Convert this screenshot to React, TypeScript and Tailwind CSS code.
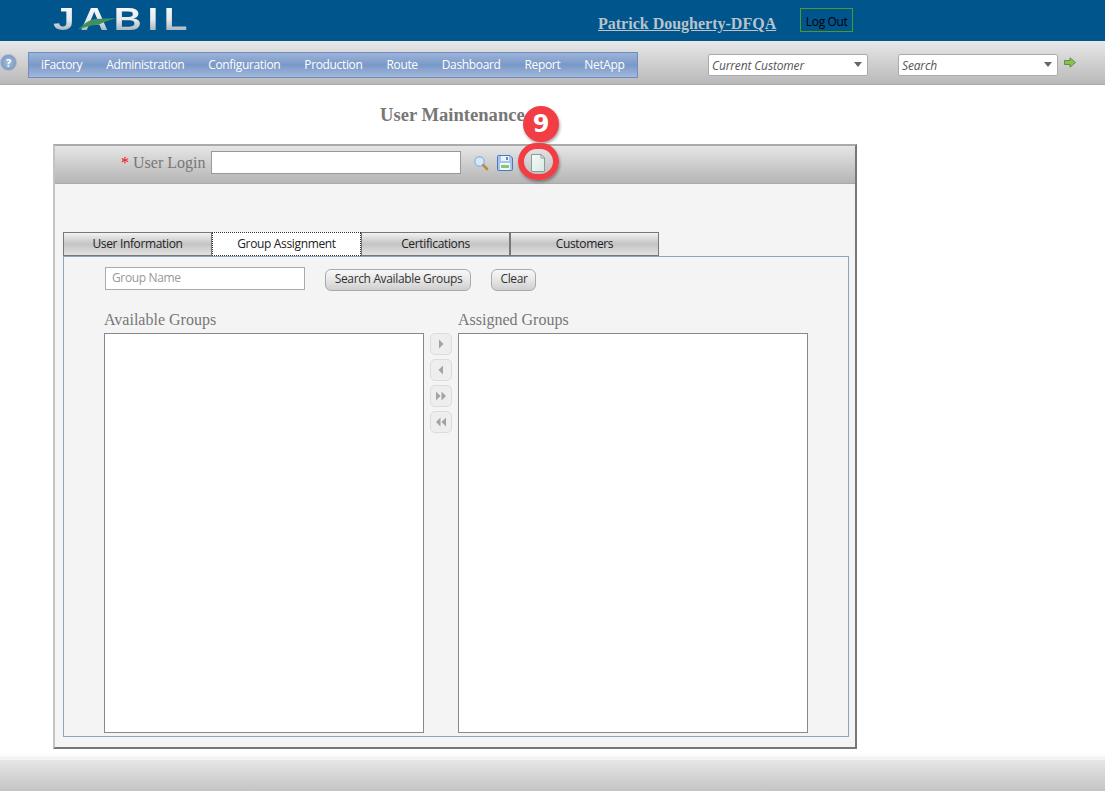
import React from "react";

const sans = "font-['Open_Sans','Noto_Sans',sans-serif] tracking-[-0.35px]";
const serif = "font-['Liberation_Serif',serif]";

const menuItems = ["iFactory", "Administration", "Configuration", "Production", "Route", "Dashboard", "Report", "NetApp"];

const Logo = () => (
  <div className="relative ml-[53px] mt-[8px] h-[23px] w-[135px]">
    <span className="block origin-left scale-x-125 bg-linear-to-b from-[#f6f8f9] via-[#e6eaec] to-[#a5b4bf] bg-clip-text font-['Liberation_Sans',sans-serif] text-[31px] font-bold leading-[23px] tracking-[4.5px] text-transparent">
      JABIL
    </span>
    <svg className="absolute left-[25px] top-[9px]" width="40" height="13" viewBox="0 0 40 13">
      <path d="M0 12.5 C6 7 11 3 17 2 L39 1 C32 3 26 5 22 7 C14 8 7 10 0 12.5Z" fill="#3f8f5f" />
    </svg>
  </div>
);

const HelpIcon = () => (
  <div className="flex h-[17px] w-[17px] items-center justify-center rounded-full border border-[#a9b9cf] bg-radial from-[#a9bfdc] to-[#6f8db8] text-[11px] font-bold leading-none text-white">
    ?
  </div>
);

const Combo = ({ label }: { label: string }) => (
  <div className="flex h-[22px] w-[160px] items-center justify-between rounded-[2px] border border-[#aaa] bg-white pl-[3px] pr-[5px]">
    <span className="pt-[2px] font-['Open_Sans',sans-serif] text-[12px] italic tracking-[-0.15px] text-[#555]">{label}</span>
    <span className="h-0 w-0 border-x-[4px] border-t-[5px] border-x-transparent border-t-[#666]" />
  </div>
);

const Tab = ({ label, active }: { label: string; active?: boolean }) => (
  <div
    className={`flex h-[24px] w-[149px] items-center justify-center text-[12px] text-[#222] ${sans} ${
      active
        ? "border border-dotted border-[#333] bg-white"
        : "border border-[#777] bg-linear-to-b from-[#f2f2f2] via-[#c4c4c4] to-[#e2e2e2]"
    }`}
  >
    {label}
  </div>
);

const GrayButton = ({ label, w }: { label: string; w: string }) => (
  <button
    className={`${w} h-[22px] rounded-[6px] border border-[#aaa] bg-linear-to-b from-[#f8f8f8] via-[#e6e6e6] to-[#cfcfcf] pb-[2px] pl-[1px] text-[12px] text-[#333] ${sans}`}
  >
    {label}
  </button>
);

const MoveButton = ({ kind }: { kind: "r" | "l" | "rr" | "ll" }) => (
  <div className="flex h-[22px] w-[22px] items-center justify-center rounded-[5px] border border-[#dcdcdc] bg-[#eeeeee]">
    <svg width="12" height="10" viewBox="0 0 12 10" fill="#a3a3a3">
      {kind === "r" && <path d="M4 0.5 L8.5 5 L4 9.5Z" />}
      {kind === "l" && <path d="M8 0.5 L3.5 5 L8 9.5Z" />}
      {kind === "rr" && <path d="M1 0.5 L5.5 5 L1 9.5Z M6.5 0.5 L11 5 L6.5 9.5Z" />}
      {kind === "ll" && <path d="M5.5 0.5 L1 5 L5.5 9.5Z M11 0.5 L6.5 5 L11 9.5Z" />}
    </svg>
  </div>
);

const ToolIcons = () => (
  <div className="ml-[12px] flex items-center">
    <svg width="16" height="16" viewBox="0 0 16 16">
      <circle cx="6.5" cy="6.5" r="4.7" fill="#d6e8f8" stroke="#93b8da" strokeWidth="1.4" />
      <path d="M10.2 10.2 L14 14" stroke="#b98a45" strokeWidth="2.6" strokeLinecap="round" />
    </svg>
    <svg className="ml-[8px]" width="16" height="16" viewBox="0 0 16 16">
      <path d="M0.5 1.5 Q0.5 0.5 1.5 0.5 H13 L15.5 3 V14.5 Q15.5 15.5 14.5 15.5 H1.5 Q0.5 15.5 0.5 14.5Z" fill="#a9c4ea" stroke="#4a78c0" />
      <rect x="4" y="1" width="8" height="5" fill="#eef4fb" />
      <rect x="9" y="2" width="2" height="3" fill="#5d8acb" />
      <rect x="3" y="8" width="10" height="7" fill="#f2f6fb" />
      <rect x="4" y="10" width="8" height="3" fill="#86c76f" />
    </svg>
    <svg className="ml-[18px]" width="14" height="18" viewBox="0 0 14 18">
      <defs>
        <linearGradient id="docFill" x1="0" y1="0" x2="1" y2="1">
          <stop offset="0" stopColor="#f6fbf8" />
          <stop offset="1" stopColor="#d8e8e2" />
        </linearGradient>
      </defs>
      <path d="M0.5 0.5 H10 L13.5 4 V17.5 H0.5Z" fill="url(#docFill)" stroke="#8b9b9b" />
      <path d="M10 0.5 V4 H13.5Z" fill="#fff" stroke="#8b9b9b" />
    </svg>
  </div>
);

const ListColumn = ({ title, w }: { title: string; w: string }) => (
  <div className={`${w} shrink-0`}>
    <div className={`${serif} h-[24px] text-[16px] leading-[22px] text-[#777]`}>{title}</div>
    <div className="h-[400px] border border-[#888] bg-white" />
  </div>
);

export default function App() {
  return (
    <div className="relative flex h-[791px] w-[1105px] flex-col overflow-hidden bg-white">
      <header className="flex h-[41px] shrink-0 bg-[#00558c]">
        <Logo />
        <a className={`${serif} ml-[410px] mt-[14px] h-[20px] text-[16px] font-bold leading-[20px] text-[#b9c3c9] underline`}>
          Patrick Dougherty-DFQA
        </a>
        <div className={`${sans} ml-[24px] mt-[8px] flex h-[24px] w-[53px] items-center justify-center border border-[#4c9a2a] pt-[3px] text-[12px] text-black`}>
          Log Out
        </div>
      </header>

      <div className="flex h-[44px] shrink-0 items-center border-b border-[#aaa] bg-linear-to-b from-[#e8e8e8] to-[#b9b9b9] pt-[4px]">
        <div className="-mt-[4px]">
          <HelpIcon />
        </div>
        <nav className="ml-[11px] flex h-[26px] w-[610px] items-center gap-[24px] border border-[#6f8fc4] bg-linear-to-b from-[#9db4d8] via-[#7a98c8] to-[#a3b9da] pl-[12px]">
          {menuItems.map((item) => (
            <span key={item} className={`${sans} text-[12px] text-white`}>
              {item}
            </span>
          ))}
        </nav>
        <div className="ml-[70px]">
          <Combo label="Current Customer" />
        </div>
        <div className="ml-[30px]">
          <Combo label="Search" />
        </div>
        <svg className="-mt-[5px] ml-[6px]" width="12" height="11" viewBox="0 0 12 11">
          <path d="M0.5 3.5 H6 V0.8 L11.5 5.5 L6 10.2 V7.5 H0.5Z" fill="#8cc152" stroke="#4f8f2f" strokeWidth="0.9" />
        </svg>
      </div>

      <main className="flex-1 pl-[53px]">
        <h1 className={`${serif} ml-[327px] mt-[20px] h-[20px] text-[18.6px] font-bold leading-[20px] text-[#777]`}>
          User Maintenance
        </h1>

        <section className="mt-[19px] h-[605px] w-[804px] border-2 border-[#777] border-l-[#c4c4c4] border-t-[#aaa] bg-[#f4f4f4]">
          <div className="flex h-[38px] items-center border-b border-[#aaa] bg-linear-to-b from-[#e6e6e6] to-[#b5b5b5] pb-[4px] pl-[66px]">
            <span className={`${serif} text-[16px] text-[#777]`}>
              <span className="text-[#f00]">* </span>User Login
            </span>
            <div className="ml-[6px] h-[23px] w-[250px] border border-[#999] bg-white" />
            <ToolIcons />
          </div>

          <div className="pl-[8px] pt-[48px]">
            <div className="flex">
              <Tab label="User Information" />
              <Tab label="Group Assignment" active />
              <Tab label="Certifications" />
              <Tab label="Customers" />
            </div>

            <div className="h-[481px] w-[786px] border border-[#8fa5b5] pl-[40px] pt-[8px]">
              <div className="flex items-center">
                <div className={`${sans} ml-[1px] flex h-[23px] w-[200px] items-center border border-[#aaa] bg-white pl-[6px] text-[12px] text-[#999]`}>
                  Group Name
                </div>
                <div className="ml-[20px]">
                  <GrayButton label="Search Available Groups" w="w-[146px]" />
                </div>
                <div className="ml-[20px]">
                  <GrayButton label="Clear" w="w-[45px]" />
                </div>
              </div>

              <div className="mt-[18px] flex">
                <ListColumn title="Available Groups" w="w-[320px]" />
                <div className="ml-[6px] mt-[24px] flex w-[28px] flex-col gap-[4px]">
                  <MoveButton kind="r" />
                  <MoveButton kind="l" />
                  <MoveButton kind="rr" />
                  <MoveButton kind="ll" />
                </div>
                <ListColumn title="Assigned Groups" w="w-[350px]" />
              </div>
            </div>
          </div>
        </section>
      </main>

      <footer className="h-[37px] shrink-0">
        <div className="h-[5px] bg-linear-to-b from-white to-[#f0f0f0]" />
        <div className="h-[32px] border-t border-[#f6f6f6] bg-linear-to-b from-[#e6e6e6] to-[#c4c4c4]" />
      </footer>

      {/* callout marker over the new-document icon */}
      <div className="absolute left-[523px] top-[106px] flex h-[36px] w-[36px] items-center justify-center rounded-full bg-[#f23d45] font-['DejaVu_Sans',sans-serif] text-[24px] font-bold text-white shadow-[1px_2px_3px_rgba(0,0,0,0.35)]">
        9
      </div>
      <div className="absolute left-[518px] top-[143px] h-[37px] w-[41px] rounded-full border-[6px] border-[#f23d45] shadow-[1px_2px_3px_rgba(0,0,0,0.35)]" />
    </div>
  );
}
